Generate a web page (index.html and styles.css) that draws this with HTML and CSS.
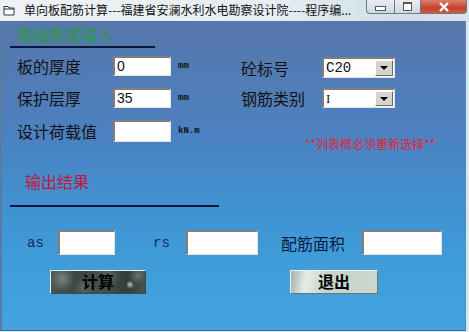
FILE: index.html
```html
<!DOCTYPE html>
<html lang="zh-CN">
  <head>
    <meta charset="UTF-8" />
    <title>单向板配筋计算</title>
    <link rel="stylesheet" href="styles.css">
  </head>
  <body>
    <div class="window">
      <div class="titlebar">
        <svg class="app-icon" width="12" height="11" viewBox="0 0 12 11">
          <path d="M1 1.5h4l1 1.5h5v7H1z" fill="#fff" stroke="#333" stroke-width="1"/>
          <path d="M1 4h10" stroke="#333" stroke-width="1"/>
        </svg>
        <span class="title">单向板配筋计算---福建省安澜水利水电勘察设计院----程序编...</span>
        <div class="controls">
          <div class="ctl ctl-min"><span></span></div>
          <div class="ctl ctl-max"><span></span></div>
          <div class="ctl ctl-close">
            <svg width="12" height="10" viewBox="0 0 12 10">
              <path d="M2 1l8 8M10 1l-8 8" stroke="#fff" stroke-width="2.4"/>
            </svg>
          </div>
        </div>
      </div>
      <div class="client">
        <div class="head head-in">基础数据输入</div>
        <div class="rule rule-in"></div>

        <div class="form">
          <div class="col-left">
            <div class="row">
              <span class="label">板的厚度</span>
              <div class="field">0</div>
              <span class="unit">mm</span>
            </div>
            <div class="row">
              <span class="label">保护层厚</span>
              <div class="field">35</div>
              <span class="unit">mm</span>
            </div>
            <div class="row row-tall">
              <span class="label">设计荷载值</span>
              <div class="field"></div>
              <span class="unit">kN.m</span>
            </div>
          </div>
          <div class="col-right">
            <div class="row row-first">
              <span class="label label-r">砼标号</span>
              <div class="combo">
                <span class="combo-val">C20</span>
                <span class="combo-btn"><i></i></span>
              </div>
            </div>
            <div class="row">
              <span class="label label-r">钢筋类别</span>
              <div class="combo">
                <span class="combo-val combo-serif">I</span>
                <span class="combo-btn"><i></i></span>
              </div>
            </div>
            <div class="note">**列表框必须重新选择**</div>
          </div>
        </div>

        <div class="head head-out">输出结果</div>
        <div class="rule rule-out"></div>

        <div class="results">
          <span class="res-label res-as">as</span>
          <div class="field res-field"></div>
          <span class="res-label res-rs">rs</span>
          <div class="field res-field res-wide"></div>
          <span class="res-area">配筋面积</span>
          <div class="field res-field res-area-field"></div>
        </div>

        <div class="buttons">
          <div class="btn btn-calc">计算</div>
          <div class="btn btn-exit">退出</div>
        </div>
      </div>
    </div>
  </body>
</html>
```

FILE: styles.css
```css
body {
  margin: 0;
  font-family: "Noto Sans CJK SC", "Noto Sans", sans-serif;
}
.window {
  width: 469px;
  height: 332px;
  background: #dbe5ee;
  display: flex;
  flex-direction: column;
}
.titlebar {
  height: 21px;
  display: flex;
  align-items: flex-start;
  background: linear-gradient(90deg, #eef2f6 0%, #e6edf3 60%, #cfe0e6 85%, #d8e4ec 100%);
}
.app-icon {
  margin: 5px 0 0 3px;
}
.title {
  margin: 2px 0 0 9px;
  font-size: 12px;
  line-height: 16px;
  color: #111;
  white-space: nowrap;
}
.controls {
  margin-left: auto;
  margin-right: 2px;
  display: flex;
  height: 14px;
}
.ctl {
  height: 13px;
  border: 1px solid #6d7a8a;
  border-top: none;
  display: flex;
  align-items: center;
  justify-content: center;
}
.ctl-min {
  width: 27px;
  border-radius: 0 0 0 4px;
  background: linear-gradient(#e9eef3, #cdd8e2);
}
.ctl-min span {
  width: 9px;
  height: 3px;
  border: 1px solid #555;
  background: #fff;
  margin-top: 3px;
}
.ctl-max {
  width: 25px;
  border-left: none;
  background: linear-gradient(#e9eef3, #cdd8e2);
}
.ctl-max span {
  width: 7px;
  height: 6px;
  border: 1px solid #555;
  border-top-width: 2px;
  background: #fff;
}
.ctl-close {
  width: 45px;
  border-left: none;
  border-radius: 0 0 4px 0;
  background: linear-gradient(#d8826c, #c4402c 60%, #d05a40);
}
.client {
  flex: 1;
  margin: 0 3px 1px 0;
  border-left: 2px solid #5a7aa0;
  border-bottom: 1px solid #3b6e9c;
  border-right: 1px solid #4c8cc0;
  background: linear-gradient(180deg, #5777aa 0%, #4c80bf 35%, #3f95d4 65%, #40a0dc 85%, #42a2dd 100%);
  display: flex;
  flex-direction: column;
}
.head {
  font-size: 16px;
  line-height: 16px;
  height: 16px;
}
.head-in {
  margin: 5px 0 0 15px;
  color: #2a9a3c;
}
.rule {
  height: 2px;
  background: #0b1638;
  margin-left: 8px;
}
.rule-in {
  width: 145px;
  margin-top: 4px;
}
.form {
  display: flex;
  margin-top: 8px;
}
.col-left {
  width: 224px;
  margin-left: 15px;
  display: flex;
  flex-direction: column;
  gap: 12px;
}
.col-right {
  display: flex;
  flex-direction: column;
  gap: 10px;
}
.row {
  display: flex;
  align-items: center;
  height: 20px;
}
.row-tall {
  height: 22px;
}
.row-first {
  height: 21px;
  margin-top: 1px;
}
.label {
  width: 96px;
  font-size: 16px;
  color: #111;
}
.label-r {
  width: 81px;
}
.field {
  box-sizing: border-box;
  width: 58px;
  height: 100%;
  background: #fff;
  border-top: 2px solid #7e7e7e;
  border-left: 2px solid #7e7e7e;
  border-right: 1px solid #e4e4e4;
  border-bottom: 1px solid #e4e4e4;
  font-family: "Liberation Sans", sans-serif;
  font-size: 14px;
  line-height: 17px;
  padding-left: 2px;
  color: #111;
}
.unit {
  margin-left: 7px;
  font-family: "Liberation Mono", monospace;
  font-size: 9px;
  font-weight: bold;
  color: #111;
}
.combo {
  box-sizing: border-box;
  width: 73px;
  height: 100%;
  background: #fff;
  border-top: 2px solid #7e7e7e;
  border-left: 2px solid #7e7e7e;
  border-right: 1px solid #e4e4e4;
  border-bottom: 1px solid #e4e4e4;
  display: flex;
  align-items: stretch;
}
.combo-val {
  flex: 1;
  padding-left: 2px;
  font-family: "Liberation Mono", monospace;
  font-size: 14px;
  line-height: 18px;
  color: #111;
}
.combo-serif {
  font-family: "Liberation Serif", serif;
  font-size: 13px;
}
.combo-btn {
  width: 16px;
  margin: 1px;
  background: #d6d3cc;
  border-top: 1px solid #fff;
  border-left: 1px solid #fff;
  border-right: 1px solid #6a6a6a;
  border-bottom: 1px solid #6a6a6a;
  display: flex;
  align-items: center;
  justify-content: center;
}
.combo-btn i {
  width: 0;
  height: 0;
  border-left: 4px solid transparent;
  border-right: 4px solid transparent;
  border-top: 4px solid #000;
}
.note {
  margin: 19px 0 0 64px;
  font-size: 12px;
  line-height: 13px;
  color: #e61e36;
  white-space: nowrap;
}
.head-out {
  margin: 23px 0 0 23px;
  color: #c4163c;
}
.rule-out {
  width: 209px;
  margin-top: 16px;
}
.results {
  display: flex;
  align-items: center;
  height: 25px;
  margin-top: 23px;
}
.res-label {
  font-family: "Liberation Mono", monospace;
  font-size: 14px;
  color: #1a2a5c;
}
.res-as {
  width: 31px;
  margin-left: 25px;
}
.res-rs {
  width: 33px;
  margin-left: 38px;
}
.res-field {
  width: 57px;
}
.res-wide {
  width: 72px;
}
.res-area {
  width: 81px;
  margin-left: 23px;
  font-size: 16px;
  color: #0e1a3c;
}
.res-area-field {
  width: 80px;
}
.buttons {
  display: flex;
  margin-top: 15px;
}
.btn {
  box-sizing: border-box;
  height: 24px;
  font-size: 16px;
  font-weight: bold;
  line-height: 21px;
  text-align: center;
  color: #000;
}
.btn-calc {
  width: 96px;
  margin-left: 48px;
  border: 1px solid #e8eef2;
  border-right-color: #3a4a50;
  border-bottom-color: #3a4a50;
  background:
    radial-gradient(circle at 84% 62%, rgba(225, 232, 225, 0.8) 0, rgba(225, 232, 225, 0) 4px),
    radial-gradient(circle at 12% 35%, rgba(140, 156, 150, 0.7) 0, rgba(140, 156, 150, 0) 12px),
    radial-gradient(circle at 35% 75%, rgba(120, 134, 128, 0.6) 0, rgba(120, 134, 128, 0) 10px),
    radial-gradient(circle at 62% 25%, rgba(110, 124, 118, 0.6) 0, rgba(110, 124, 118, 0) 11px),
    radial-gradient(circle at 92% 20%, rgba(130, 142, 136, 0.6) 0, rgba(130, 142, 136, 0) 8px),
    linear-gradient(90deg, #4a5550 0%, #3a4540 30%, #46524c 55%, #333d38 80%, #48534e 100%);
}
.btn-exit {
  width: 88px;
  margin-left: 144px;
  border: 1px solid #eef2ee;
  border-right-color: #6a7670;
  border-bottom-color: #6a7670;
  background: linear-gradient(100deg, #a4b0aa 0%, #e4ece6 18%, #c8d4cc 40%, #cad6ce 100%);
}
```
